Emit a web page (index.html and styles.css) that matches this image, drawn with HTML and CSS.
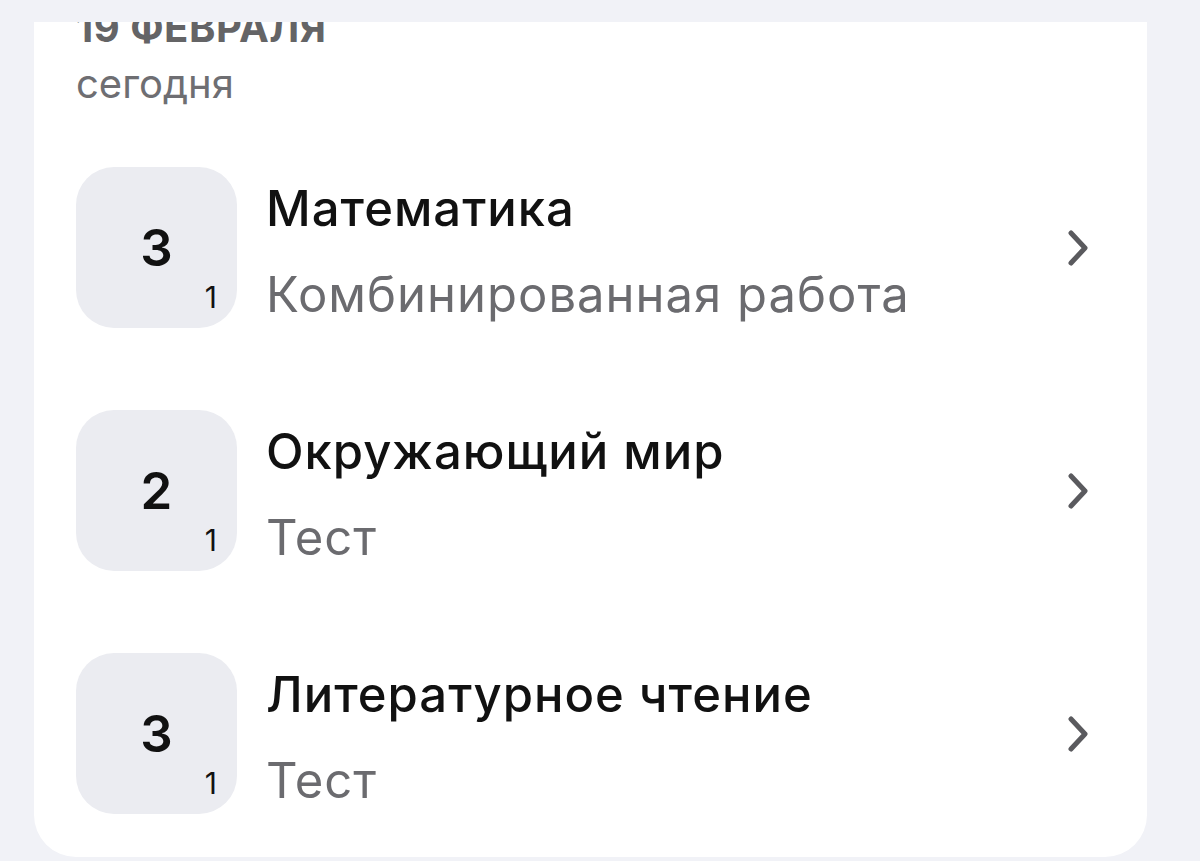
FILE: index.html
```html
<!DOCTYPE html>
<html lang="ru">
<head>
<meta charset="utf-8">
<link rel="stylesheet" href="styles.css">
</head>
<body>
<div class="viewport">
  <section class="card">
    <header class="day">
      <div class="day-date">19 ФЕВРАЛЯ</div>
      <div class="day-rel">сегодня</div>
    </header>
    <ul class="list">
      <li class="row">
        <div class="grade"><span class="grade-val">3</span><span class="grade-w">1</span></div>
        <div class="info">
          <div class="title">Математика</div>
          <div class="sub">Комбинированная работа</div>
        </div>
        <svg class="chev" viewBox="0 0 24 36" width="24" height="36"><path d="M4 3 L18 18 L4 33" fill="none" stroke="#5a5a5e" stroke-width="5" stroke-linecap="round" stroke-linejoin="round"/></svg>
      </li>
      <li class="row">
        <div class="grade"><span class="grade-val">2</span><span class="grade-w">1</span></div>
        <div class="info">
          <div class="title">Окружающий мир</div>
          <div class="sub">Тест</div>
        </div>
        <svg class="chev" viewBox="0 0 24 36" width="24" height="36"><path d="M4 3 L18 18 L4 33" fill="none" stroke="#5a5a5e" stroke-width="5" stroke-linecap="round" stroke-linejoin="round"/></svg>
      </li>
      <li class="row">
        <div class="grade"><span class="grade-val">3</span><span class="grade-w">1</span></div>
        <div class="info">
          <div class="title">Литературное чтение</div>
          <div class="sub">Тест</div>
        </div>
        <svg class="chev" viewBox="0 0 24 36" width="24" height="36"><path d="M4 3 L18 18 L4 33" fill="none" stroke="#5a5a5e" stroke-width="5" stroke-linecap="round" stroke-linejoin="round"/></svg>
      </li>
    </ul>
  </section>
</div>
</body>
</html>
```
FILE: styles.css
```css
html, body {
  margin: 0;
  padding: 0;
  background: #f1f2f7;
  font-family: Inter, "Noto Sans", sans-serif;
}
.viewport {
  margin: 22px 0 0 34px;
  width: 1113px;
  height: 835px;
  overflow: hidden;
  background: #ffffff;
  border-radius: 0 0 42px 42px;
}
.card {
  padding: 0 56px 0 42px;
}
.day {
  margin-top: -18px;
}
.day-date {
  font-size: 40px;
  font-weight: 700;
  color: #646466;
  line-height: 48px;
  letter-spacing: 0.5px;
}
.day-rel {
  font-size: 40px;
  color: #6e6e72;
  line-height: 56px;
  margin-top: 4px;
}
.list {
  list-style: none;
  margin: 55px 0 0;
  padding: 0;
  display: flex;
  flex-direction: column;
  gap: 82px;
}
.row {
  display: flex;
  align-items: center;
  height: 161px;
}
.grade {
  position: relative;
  width: 161px;
  height: 161px;
  flex: none;
  border-radius: 38px;
  background: #ebecf1;
  display: flex;
  align-items: center;
  justify-content: center;
}
.grade-val {
  font-size: 51px;
  font-weight: 600;
  color: #111;
}
.grade-w {
  position: absolute;
  right: 20px;
  bottom: 16px;
  font-size: 30px;
  color: #111;
  line-height: 1;
}
.info {
  flex: 1;
  align-self: flex-start;
  margin: 14px 0 0 29px;
  display: flex;
  flex-direction: column;
  gap: 30px;
}
.title {
  font-size: 49px;
  font-weight: 450;
  letter-spacing: 1px;
  color: #111;
  line-height: 56px;
}
.sub {
  font-size: 49px;
  letter-spacing: 1px;
  color: #6b6b6f;
  line-height: 56px;
}
.chev {
  flex: none;
}
```
